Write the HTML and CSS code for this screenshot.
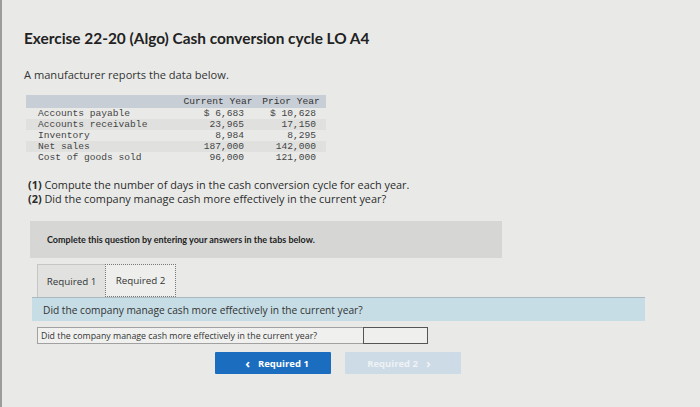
FILE: index.html
```html
<!DOCTYPE html>
<html>
<head>
<meta charset="utf-8">
<link rel="stylesheet" href="styles.css">
</head>
<body>
<div class="page">
  <h1 class="title">Exercise 22-20 (Algo) Cash conversion cycle LO A4</h1>
  <p class="intro">A manufacturer reports the data below.</p>
  <table class="data">
    <tr class="head"><th class="lbl"></th><th class="cur">Current Year</th><th class="pri">Prior Year</th></tr>
    <tr><td class="lbl">Accounts payable</td><td class="cur">$ 6,683</td><td class="pri">$ 10,628</td></tr>
    <tr class="alt"><td class="lbl">Accounts receivable</td><td class="cur">23,965</td><td class="pri">17,150</td></tr>
    <tr><td class="lbl">Inventory</td><td class="cur">8,984</td><td class="pri">8,295</td></tr>
    <tr class="alt"><td class="lbl">Net sales</td><td class="cur">187,000</td><td class="pri">142,000</td></tr>
    <tr><td class="lbl">Cost of goods sold</td><td class="cur">96,000</td><td class="pri">121,000</td></tr>
  </table>
  <div class="questions">
    <p><b>(1)</b> Compute the number of days in the cash conversion cycle for each year.</p>
    <p><b>(2)</b> Did the company manage cash more effectively in the current year?</p>
  </div>
  <div class="notice">Complete this question by entering your answers in the tabs below.</div>
  <div class="tabs">
    <div class="tab tab1">Required 1</div>
    <div class="tab tab2">Required 2</div>
  </div>
  <div class="qbar">Did the company manage cash more effectively in the current year?</div>
  <div class="answer">
    <div class="answer-label">Did the company manage cash more effectively in the current year?</div>
    <div class="answer-input"></div>
  </div>
  <div class="nav">
    <div class="btn btn-prev"><span class="chev">&lsaquo;</span> Required 1</div>
    <div class="btn btn-next">Required 2 <span class="chev">&rsaquo;</span></div>
  </div>
</div>
</body>
</html>
```

FILE: styles.css
```css
html, body {
  margin: 0;
  padding: 0;
  background: #e9eae8;
}
body {
  font-family: "Open Sans", "Liberation Sans", sans-serif;
  color: #2a2a2a;
  width: 700px;
  height: 407px;
  overflow: hidden;
  border-left: 2px solid #9c9d9b;
  box-sizing: border-box;
}
.page {
  padding: 28px 0 0 22px;
}
.title {
  margin: 0;
  font-family: Lato, "Open Sans", sans-serif;
  font-size: 15.4px;
  font-weight: 700;
  line-height: 20px;
  color: #222;
}
.intro {
  margin: 19px 0 0 0;
  font-size: 11.1px;
  line-height: 16px;
  color: #333;
}
.data {
  margin: 12px 0 0 2px;
  border-collapse: collapse;
  font-family: "Liberation Mono", "DejaVu Sans Mono", monospace;
  font-size: 9.6px;
  color: #444;
}
.data th, .data td {
  padding: 0;
  line-height: 11px;
  height: 11px;
  font-weight: normal;
  white-space: nowrap;
}
.data .head th {
  background: #c8ced6;
  height: 13px;
  line-height: 13px;
  text-align: center;
  color: #333;
}
.data tr.alt td {
  background: #e0e1df;
}
.data .lbl {
  width: 142px;
  padding-left: 12px;
  text-align: left;
}
.data .cur {
  width: 64px;
  padding-right: 12px;
  text-align: right;
}
.data .pri {
  width: 60px;
  padding-right: 10px;
  text-align: right;
}
.data .head .cur, .data .head .pri {
  padding: 0;
  text-align: center;
}
.data .head .cur { width: 76px; }
.data .head .pri { width: 70px; }
.questions {
  margin: 15px 0 0 4px;
  font-size: 10.9px;
  line-height: 14px;
  color: #2a2a2a;
}
.questions p { margin: 0; }
.notice {
  margin: 15px 0 0 6px;
  width: 472px;
  height: 37px;
  background: #d6d7d5;
  box-sizing: border-box;
  padding: 0 0 0 17px;
  display: flex;
  align-items: center;
  font-family: Lato, "Open Sans", sans-serif;
  font-size: 9px;
  font-weight: 700;
  color: #222;
}
.tabs {
  margin: 6px 0 0 13px;
  display: flex;
  height: 33px;
}
.tab {
  display: flex;
  align-items: center;
  justify-content: center;
  font-size: 9.8px;
  color: #333;
  box-sizing: border-box;
}
.tab1 {
  width: 68px;
  background: #e1e2e0;
  border-left: 1px solid #c6c7c5;
  border-top: 1px solid #c6c7c5;
}
.tab2 {
  width: 71px;
  background: #eeefed;
  border: 1px dotted #777;
}
.qbar {
  margin: 0 0 0 8px;
  width: 613px;
  height: 24px;
  box-sizing: border-box;
  background: #c6dde6;
  border-top: 1px solid #aab8bf;
  padding-left: 11px;
  display: flex;
  align-items: center;
  font-size: 10.2px;
  color: #333;
}
.answer {
  margin: 6px 0 0 13px;
  display: flex;
  height: 17px;
}
.answer-label {
  width: 326px;
  box-sizing: border-box;
  border: 1px solid #a0a1a0;
  border-right: none;
  background: #f0f1ef;
  padding-left: 3px;
  display: flex;
  align-items: center;
  font-size: 8.8px;
  color: #333;
}
.answer-input {
  width: 65px;
  box-sizing: border-box;
  border: 1.5px solid #555;
  background: #eff0ee;
}
.nav {
  margin: 8px 0 0 191px;
  display: flex;
  gap: 14px;
}
.btn {
  width: 116px;
  height: 22px;
  display: flex;
  align-items: center;
  justify-content: center;
  font-size: 9.5px;
  font-weight: 700;
  box-sizing: border-box;
  border-radius: 1px;
}
.btn-prev {
  background: #1b6dbf;
  color: #fff;
}
.btn-next {
  background: #cddbe6;
  color: #eef2f5;
}
.chev {
  font-size: 13px;
  margin: 0 8px;
  line-height: 10px;
}
```
